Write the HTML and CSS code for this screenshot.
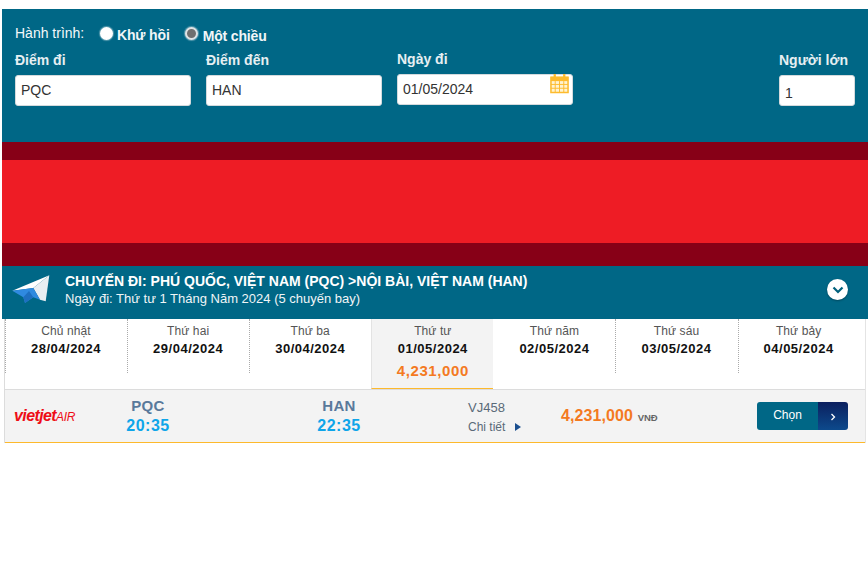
FILE: index.html
```html
<!DOCTYPE html>
<html lang="vi">
<head>
<meta charset="utf-8">
<title>Chuyến đi</title>
<link rel="stylesheet" href="styles.css">
</head>
<body>
<main class="page">
  <section class="search">
    <div class="trip">
      <span class="trip-label">Hành trình:</span>
      <span class="radio"></span><span class="radio-text">Khứ hồi</span>
      <span class="radio checked"></span><span class="radio-text lower">Một chiều</span>
    </div>
    <div class="fields">
      <div class="field from"><label>Điểm đi</label><div class="input">PQC</div></div>
      <div class="field to"><label>Điểm đến</label><div class="input">HAN</div></div>
      <div class="field date"><label>Ngày đi</label>
        <div class="input">01/05/2024
          <svg class="cal" viewBox="0 0 20 21" width="19" height="21">
            <path d="M1 4h18v16H1z" fill="#fff3d0" stroke="#fdbb2d" stroke-width="1.6"/>
            <path d="M1 3.500h18V8H1z" fill="#fdbb2d"/>
            <path d="M5 0.500v5M15 0.500v5" stroke="#fdbb2d" stroke-width="2.400"/>
            <path d="M5.500 8v12M10 8v12M14.500 8v12M1 11.500h18M1 15.500h18" stroke="#fdbb2d" stroke-width="1"/>
          </svg>
        </div>
      </div>
      <div class="field adult"><label>Người lớn</label><div class="input one">1</div></div>
    </div>
  </section>
  <section class="banner"><div class="banner-core"></div></section>
  <section class="heading">
    <svg class="plane" viewBox="0 0 38 29" width="38" height="29">
      <path d="M37.300.3.300 15.700 21.300 13z" fill="#fff"/>
      <path d="M37.300.3 21.300 13 28 24.700l5.700 1.600z" fill="#e9eef2"/>
      <path d="M.3 15.700 21.300 13 28 24.700l-6.700-2.400L13 28l-1.700-5.700z" fill="#2f8ae0"/>
      <path d="M11.300 22.300 13 28l8.300-5.700L17 16z" fill="#1e6fc0"/>
    </svg>
    <div class="heading-text">
      <h1>CHUYẾN ĐI: PHÚ QUỐC, VIỆT NAM (PQC) &gt;NỘI BÀI, VIỆT NAM (HAN)</h1>
      <p>Ngày đi: Thứ tư 1 Tháng Năm 2024 (5 chuyến bay)</p>
    </div>
    <span class="toggle">
      <svg viewBox="0 0 12 8" width="12" height="8"><path d="M1.500 1.500 6 6l4.500-4.500" fill="none" stroke="#00607c" stroke-width="2.200"/></svg>
    </span>
  </section>
  <section class="results">
    <div class="tabs">
      <div class="tab"><span class="day">Chủ nhật</span><strong>28/04/2024</strong></div>
      <div class="tab"><span class="day">Thứ hai</span><strong>29/04/2024</strong></div>
      <div class="tab"><span class="day">Thứ ba</span><strong>30/04/2024</strong></div>
      <div class="tab active"><span class="day">Thứ tư</span><strong>01/05/2024</strong><em>4,231,000</em></div>
      <div class="tab"><span class="day">Thứ năm</span><strong>02/05/2024</strong></div>
      <div class="tab"><span class="day">Thứ sáu</span><strong>03/05/2024</strong></div>
      <div class="tab"><span class="day">Thứ bảy</span><strong>04/05/2024</strong></div>
    </div>
    <div class="flight">
      <div class="logo">vietjet<span class="logo-air">AIR</span></div>
      <div class="place dep"><b>PQC</b><span>20:35</span></div>
      <div class="place arr"><b>HAN</b><span>22:35</span></div>
      <div class="code"><span>VJ458</span><span class="more">Chi tiết <i class="tri"></i></span></div>
      <div class="price">4,231,000 <small>VNĐ</small></div>
      <div class="pick"><span class="pick-text">Chọn</span><span class="pick-arrow"><svg viewBox="0 0 6 8" width="6" height="8"><path d="M1.500 1 4.500 4l-3 3" fill="none" stroke="#fff" stroke-width="1.300"/></svg></span></div>
    </div>
  </section>
</main>
</body>
</html>
```
FILE: styles.css
```css
* { box-sizing: border-box; }
html, body { margin: 0; padding: 0; background: #fff; }
body { font-family: "Liberation Sans", Arial, sans-serif; color: #333; overflow: hidden; }
.page { width: 866px; margin: 9px 0 0 2px; }

.search { height: 133px; background: #006786; padding: 15px 13px 0; color: #fff; }
.trip { display: flex; align-items: center; height: 20px; font-size: 14px; }
.trip-label { width: 85px; margin-top: -2px; color: #f4f8fa; }
.radio { width: 13px; height: 13px; border-radius: 50%; background: #fff; box-shadow: 0 0 1px 1px rgba(255,255,255,.35); margin-top: -1px; }
.radio.checked { background: #6f6f6f; border: 2px solid #dfe3e5; margin-left: 15px; margin-top: -1px; }
.radio-text { font-weight: 700; margin-left: 5px; color: #f2f6f8; margin-top: 1px; letter-spacing: -.15px; }
.radio-text:nth-of-type(3) { margin-left: 4px; }
.radio-text.lower { margin-top: 3px; margin-left: 5px; }

.fields { display: flex; margin-top: 6px; }
.field label { display: block; height: 20px; font-size: 14px; line-height: 20px; font-weight: 700; color: #e6eff2; }
.field { width: 176px; margin-right: 15px; }
.date { margin-top: -1px; }
.adult { width: 76px; margin: 0 0 0 191px; }
.input { position: relative; height: 31px; margin-top: 5px; padding: 0 5px; background: #fff; border: 1px solid #d4dadd; border-radius: 3px; font-size: 14px; line-height: 28px; color: #333; }
.input.one { line-height: 34px; font-size: 14px; }
.cal { position: absolute; top: -2px; right: 3px; }

.banner { height: 124px; background: #870017; padding-top: 18px; }
.banner-core { height: 83px; background: #ee1c25; }

.heading { position: relative; height: 53px; background: #006786; display: flex; padding: 6px 0 0 10px; color: #fff; }
.plane { margin-top: 3px; flex: none; }
.heading-text { margin-left: 15px; }
.heading h1 { margin: 0; font-size: 14px; line-height: 18px; font-weight: 700; }
.heading p { margin: 0; font-size: 13px; line-height: 18px; color: #f0f5f7; }
.toggle { position: absolute; top: 13px; left: 825px; width: 21px; height: 21px; border-radius: 50%; background: #fff; display: flex; align-items: center; justify-content: center; box-shadow: 0 1px 2px rgba(0,0,0,.3); }
.toggle svg { display: block; }

.results { margin-left: 2px; width: 862px; border-left: 1px solid #dcdcdc; border-right: 1px solid #e4e4e4; }
.tabs { display: flex; height: 70px; padding-left: 0; }
.tab { position: relative; width: 122.1px; flex: none; text-align: center; display: flex; flex-direction: column; padding-top: 4px; }
.tab::after { content: ""; position: absolute; top: 0; right: -1px; height: 54px; border-right: 1px dotted #aaa; }
.tab:first-child::before { content: ""; position: absolute; top: 0; left: 0; height: 54px; border-left: 1px dotted #aaa; }
.tab:last-child::after, .tab.active::after { display: none; }
.tab.active { background: #f3f3f3; border-bottom: 1px solid #fdb92c; border-left: 1px solid #e3e3e3; }
.day { font-size: 12px; line-height: 16px; color: #555; letter-spacing: .1px; }
.tab strong { font-size: 13px; line-height: 19px; color: #111; letter-spacing: .5px; }
.tab em { font-style: normal; font-weight: 700; font-size: 15px; line-height: 20px; margin-top: 3px; color: #f47a1f; letter-spacing: .6px; }

.flight { position: relative; height: 54px; display: flex; background: #f3f3f3; border-top: 1px solid #dcdcdc; border-bottom: 1px solid #fdb92c; }
.logo { width: 104px; padding: 17px 0 0 9px; font-size: 16px; line-height: 18px; font-weight: 700; font-style: italic; color: #ee0d16; letter-spacing: -.6px; white-space: nowrap; }
.logo-air { font-size: 12px; font-weight: 400; letter-spacing: -.3px; }
.place { display: flex; flex-direction: column; align-items: center; width: 78px; padding-top: 7px; }
.place b { font-size: 15px; line-height: 18px; color: #59799b; letter-spacing: .3px; }
.place span { font-size: 16px; line-height: 20px; margin-top: 1px; font-weight: 700; color: #0ea5e9; letter-spacing: .5px; }
.dep { margin-left: 0; }
.arr { margin-left: 113px; }
.code { display: flex; flex-direction: column; width: 92px; margin-left: 90px; padding-top: 9px; font-size: 13px; line-height: 18px; color: #5a6a78; }
.more { margin-top: 1px; display: flex; align-items: center; font-size: 12px; }
.tri { width: 0; height: 0; margin-left: 10px; border-left: 6px solid #1b4f8f; border-top: 4px solid transparent; border-bottom: 4px solid transparent; }
.price { width: 197px; padding-top: 16px; font-size: 16px; line-height: 20px; font-weight: 700; color: #f47a1f; letter-spacing: .1px; margin-left: 1px; margin-right: -1px; }
.price small { font-size: 9.500px; color: #666; letter-spacing: 0; }
.pick { display: flex; align-self: flex-start; margin-top: 12px; width: 91px; height: 28px; border-radius: 3px; overflow: hidden; color: #fff; font-size: 12px; }
.pick-text { width: 61px; background: #006786; text-align: center; line-height: 27px; }
.pick-arrow { width: 30px; background: linear-gradient(#0b1f5e, #0d4a8c); display: flex; align-items: center; justify-content: center; padding-top: 1px; }
```
